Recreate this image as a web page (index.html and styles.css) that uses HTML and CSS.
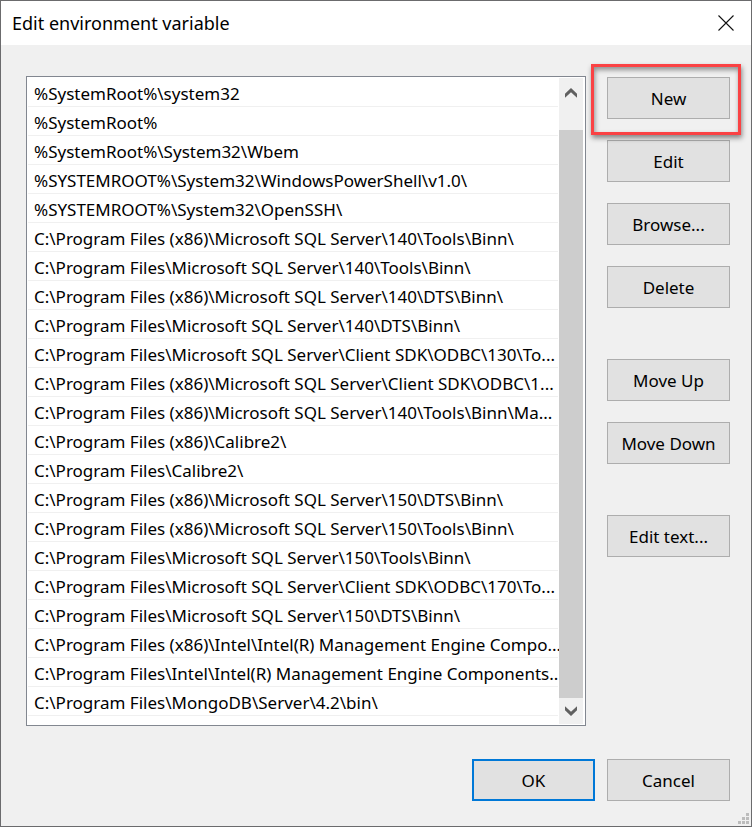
FILE: index.html
```html
<!DOCTYPE html>
<html lang="en">
<head>
<meta charset="utf-8">
<meta name="viewport" content="width=device-width, initial-scale=1">
<title>Edit environment variable</title>
<link rel="stylesheet" href="styles.css">
</head>
<body>
<main class="dialog">
  <header class="titlebar">
    <h1 class="title">Edit environment variable</h1>
    <button class="close" type="button" aria-label="Close">
      <svg width="16" height="16" viewBox="0 0 16 16"><path d="M.5.5l15 15M15.5.5l-15 15" fill="none" stroke="#111" stroke-width="1.1"/></svg>
    </button>
  </header>
  <div class="content">
    <div class="listbox">
      <ul class="paths">
        <li>%SystemRoot%\system32</li>
        <li>%SystemRoot%</li>
        <li>%SystemRoot%\System32\Wbem</li>
        <li>%SYSTEMROOT%\System32\WindowsPowerShell\v1.0\</li>
        <li>%SYSTEMROOT%\System32\OpenSSH\</li>
        <li>C:\Program Files (x86)\Microsoft SQL Server\140\Tools\Binn\</li>
        <li>C:\Program Files\Microsoft SQL Server\140\Tools\Binn\</li>
        <li>C:\Program Files (x86)\Microsoft SQL Server\140\DTS\Binn\</li>
        <li>C:\Program Files\Microsoft SQL Server\140\DTS\Binn\</li>
        <li>C:\Program Files\Microsoft SQL Server\Client SDK\ODBC\130\To...</li>
        <li>C:\Program Files (x86)\Microsoft SQL Server\Client SDK\ODBC\1...</li>
        <li>C:\Program Files (x86)\Microsoft SQL Server\140\Tools\Binn\Ma...</li>
        <li>C:\Program Files (x86)\Calibre2\</li>
        <li>C:\Program Files\Calibre2\</li>
        <li>C:\Program Files (x86)\Microsoft SQL Server\150\DTS\Binn\</li>
        <li>C:\Program Files (x86)\Microsoft SQL Server\150\Tools\Binn\</li>
        <li>C:\Program Files\Microsoft SQL Server\150\Tools\Binn\</li>
        <li>C:\Program Files\Microsoft SQL Server\Client SDK\ODBC\170\To...</li>
        <li>C:\Program Files\Microsoft SQL Server\150\DTS\Binn\</li>
        <li>C:\Program Files (x86)\Intel\Intel(R) Management Engine Compo...</li>
        <li>C:\Program Files\Intel\Intel(R) Management Engine Components...</li>
        <li>C:\Program Files\MongoDB\Server\4.2\bin\</li>
      </ul>
      <div class="scrollbar">
        <button class="arrow arrow-up" type="button" aria-label="Scroll up">
          <svg width="12" height="10" viewBox="0 0 12 10"><path d="M0 5.8L6 0l6 5.8v3.9L6 4.2 0 9.7z" fill="#606060"/></svg>
        </button>
        <div class="thumb"></div>
        <button class="arrow arrow-down" type="button" aria-label="Scroll down">
          <svg width="12" height="10" viewBox="0 0 12 10"><path d="M0 .3l6 5.5L12 .3v3.9L6 10 0 4.2z" fill="#606060"/></svg>
        </button>
      </div>
    </div>
    <div class="actions">
      <div class="group">
        <div class="highlighted"><button class="btn" type="button">New</button></div>
        <button class="btn" type="button">Edit</button>
        <button class="btn" type="button">Browse...</button>
        <button class="btn" type="button">Delete</button>
      </div>
      <div class="group">
        <button class="btn" type="button">Move Up</button>
        <button class="btn" type="button">Move Down</button>
      </div>
      <div class="group">
        <button class="btn" type="button">Edit text...</button>
      </div>
    </div>
  </div>
  <footer class="footer">
    <button class="btn btn-default" type="button">OK</button>
    <button class="btn" type="button">Cancel</button>
  </footer>
  <svg class="grip" width="11" height="11" viewBox="0 0 11 11" aria-hidden="true"><path d="M8 0h3v3H8zM4 4h3v3H4zM8 4h3v3H8zM0 8h3v3H0zM4 8h3v3H4zM8 8h3v3H8z" fill="#bcbcbc"/></svg>
</main>
</body>
</html>
```
FILE: styles.css
```css
* {
  box-sizing: border-box;
}

body {
  margin: 0;
  background: #f0f0f0;
  color: #000;
  font-family: "Noto Sans", "Open Sans", sans-serif;
  font-size: 17px;
}

button {
  font: inherit;
  color: inherit;
}

.dialog {
  position: relative;
  display: flex;
  flex-direction: column;
  min-height: 100vh;
  border: 1px solid #6b6b6d;
  background: #f0f0f0;
}

.titlebar {
  display: flex;
  align-items: center;
  justify-content: space-between;
  height: 44px;
  padding: 0 17px 0 11px;
  background: #fff;
}

.title {
  margin: 0;
  font-size: 18px;
  font-weight: 400;
}

.close {
  display: flex;
  padding: 0;
  border: 0;
  background: none;
}

.content {
  display: flex;
  gap: 21px;
  padding: 31px 21px 0 25px;
}

.listbox {
  display: flex;
  flex: 1;
  min-width: 0;
  padding: 1px;
  border: 1px solid #828790;
  background: #fff;
}

.paths {
  flex: 1;
  min-width: 0;
  margin: 0;
  padding: 0 0 8px;
  list-style: none;
}

.paths li {
  height: 29px;
  padding-left: 6px;
  border-bottom: 1px solid #f0f0f0;
  line-height: 32px;
  white-space: nowrap;
}

.scrollbar {
  display: flex;
  flex-direction: column;
  width: 24px;
  margin: 0 1px;
  background: #f0f0f0;
}

.arrow {
  display: flex;
  align-items: center;
  justify-content: center;
  padding: 0;
  border: 0;
  background: none;
}

.arrow-up {
  height: 29px;
  margin-bottom: 23px;
}

.arrow-down {
  height: 26px;
}

.thumb {
  flex: 1;
  background: #cdcdcd;
}

.actions {
  display: flex;
  flex-direction: column;
  gap: 51px;
  padding-top: 1px;
}

.group {
  display: flex;
  flex-direction: column;
  gap: 21px;
}

.btn {
  display: block;
  width: 123px;
  height: 42px;
  padding: 0;
  border: 1px solid #adadad;
  background: #e1e1e1;
}

.btn-default {
  border: 2px solid #0078d7;
}

.highlighted {
  position: relative;
}

.highlighted::after {
  content: "";
  position: absolute;
  inset: -13px -11px -16px -16px;
  border: 3px solid #fa4244;
  box-shadow: 1px 3px 5px rgba(0, 0, 0, 0.45), inset 1px 3px 5px rgba(0, 0, 0, 0.4);
  pointer-events: none;
}

.footer {
  display: flex;
  justify-content: flex-end;
  gap: 12px;
  padding: 33px 21px 25px;
}

.grip {
  position: absolute;
  right: 2px;
  bottom: 2px;
}
```
